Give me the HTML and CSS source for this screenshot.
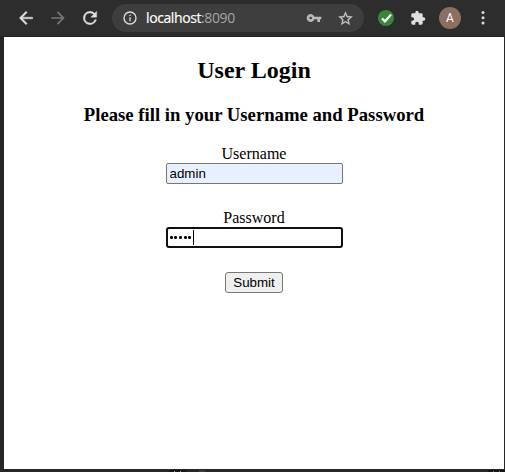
FILE: index.html
```
<!DOCTYPE html>
<html lang="en">
<head>
<meta charset="utf-8">
<title>User Login</title>
<link rel="stylesheet" href="styles.css">
</head>
<body>
<header class="toolbar">
  <svg class="icon back" viewBox="0 0 24 24"><path d="M20 11H7.83l5.59-5.59L12 4l-8 8 8 8 1.41-1.41L7.83 13H20v-2z"/></svg>
  <svg class="icon forward" viewBox="0 0 24 24"><path d="M12 4l-1.41 1.41L16.17 11H4v2h12.17l-5.58 5.59L12 20l8-8z"/></svg>
  <svg class="icon reload" viewBox="0 0 24 24"><path d="M17.65 6.35A7.96 7.96 0 0 0 12 4a8 8 0 1 0 7.73 10h-2.08A6 6 0 1 1 12 6c1.66 0 3.14.69 4.22 1.78L13 11h7V4l-2.35 2.35z"/></svg>
  <div class="address">
    <svg class="info" viewBox="0 0 24 24"><path d="M11 7h2v2h-2zm0 4h2v6h-2zm1-9a10 10 0 1 0 0 20 10 10 0 0 0 0-20zm0 18a8 8 0 1 1 0-16 8 8 0 0 1 0 16z"/></svg>
    <span class="url"><span class="host">localhost</span><span class="port">:8090</span></span>
    <svg class="key" viewBox="0 0 24 24"><path d="M12.650 10A6 6 0 1 0 12.650 14H17v4h4v-4h2v-4H12.650zM7 14a2 2 0 1 1 0-4 2 2 0 0 1 0 4z"/></svg>
    <svg class="star" viewBox="0 0 24 24"><path d="M22 9.24l-7.19-.62L12 2 9.19 8.63 2 9.24l5.46 4.73L5.82 21 12 17.27 18.18 21l-1.63-7.03L22 9.24zM12 15.4l-3.76 2.27 1-4.28-3.32-2.88 4.38-.38L12 6.1l1.71 4.04 4.38.38-3.32 2.88 1 4.28L12 15.4z"/></svg>
  </div>
  <svg class="check" viewBox="0 0 16 16"><circle cx="8" cy="8" r="8"/><path d="M4 8.500l2.900 2.900 6.200-7"/></svg>
  <svg class="puzzle" viewBox="0 0 24 24"><path d="M20.500 11H19V7c0-1.100-.9-2-2-2h-4V3.500a2.500 2.500 0 0 0-5 0V5H4c-1.100 0-2 .9-2 2v3.800h1.500a2.700 2.700 0 0 1 0 5.400H2V20c0 1.100.9 2 2 2h3.800v-1.500a2.700 2.700 0 0 1 5.400 0V22H17c1.100 0 2-.9 2-2v-4h1.500a2.500 2.500 0 0 0 0-5z"/></svg>
  <span class="avatar">A</span>
  <svg class="menu" viewBox="0 0 4 16"><circle cx="2" cy="2.500" r="1.500"/><circle cx="2" cy="7.800" r="1.500"/><circle cx="2" cy="13.100" r="1.500"/></svg>
</header>
<main class="page">
  <h2>User Login</h2>
  <h3>Please fill in your Username and Password</h3>
  <form class="login">
    <label for="username">Username</label>
    <input class="field filled" id="username" type="text" value="admin">
    <label for="password">Password</label>
    <div class="field focused" id="password"><span class="dots"><i></i><i></i><i></i><i></i><i></i></span><span class="caret"></span></div>
    <button type="button">Submit</button>
  </form>
</main>
<footer class="edge"><span class="notch"><i></i><i></i></span><span class="block"></span><span class="notch end"><i></i><i></i></span></footer>
</body>
</html>
```
FILE: styles.css
```
* { box-sizing: border-box; }
body {
  margin: 0;
  width: 505px;
  height: 472px;
  overflow: hidden;
  background: #272727;
  font-family: "Liberation Serif", serif;
  font-size: 16px;
  color: #000;
}
svg { display: block; flex: none; fill: #dedede; }
.toolbar {
  display: flex;
  align-items: center;
  height: 37px;
  padding: 0 0 1px 16px;
  background: #2d2d2d;
  border-bottom: 1px solid #222;
}
.icon { width: 20px; height: 20px; }
.back, .reload { stroke: #dedede; stroke-width: 0.5; }
.forward { margin-left: 12px; fill: #777; }
.reload { margin-left: 12px; }
.address {
  display: flex;
  align-items: center;
  width: 252px;
  height: 28px;
  margin: 1px 0 0 12px;
  padding-left: 10px;
  border-radius: 14px;
  background: #3e3e3e;
}
.info { width: 16px; height: 16px; }
.url {
  width: 160px;
  margin-left: 8px;
  font: 14px/20px "Open Sans", sans-serif;
  letter-spacing: -0.4px;
  white-space: nowrap;
}
.host { color: #fff; -webkit-text-stroke: 0.2px #fff; }
.port { color: #a5a5a5; }
.key { width: 16px; height: 16px; margin-top: -1px; fill: #b8b8b8; }
.star { width: 17px; height: 17px; margin-left: 15px; fill: #c4c4c4; stroke: #c4c4c4; stroke-width: 0.3; }
.check { width: 16px; height: 16px; margin-left: 14px; fill: #388738; }
.check path { fill: none; stroke: #fff; stroke-width: 2.2; }
.puzzle { width: 16px; height: 16px; margin-left: 16px; }
.avatar {
  width: 22px;
  height: 22px;
  margin-left: 13px;
  border-radius: 50%;
  background: #8d6e63;
  color: #fff;
  font: 12px/23px Roboto, sans-serif;
  text-align: center;
}
.menu { width: 4px; height: 16px; margin-left: 20px; }
.page {
  width: 500px;
  height: 432px;
  margin-left: 4px;
  padding-top: 20px;
  background: #fff;
  text-align: center;
}
h2 { margin: 0 0 20px; font-size: 24px; line-height: 27px; }
h3 { margin: 0; font-size: 18.72px; line-height: 22px; }
.login {
  display: flex;
  flex-direction: column;
  align-items: center;
  margin-top: 19px;
}
label { height: 18px; line-height: 18px; }
.field {
  width: 177px;
  height: 21px;
  margin: 0 0 25px;
  padding: 1px 3px;
  border: 1px solid #767676;
  border-radius: 2px;
  font: 13.333px "Liberation Sans", sans-serif;
}
.filled { background: #e8f0fe; color: #000; }
.focused {
  display: flex;
  align-items: center;
  padding: 0 2px;
  border: 2px solid #101010;
  border-radius: 3px;
}
.dots { display: flex; gap: 1.670px; padding: 0 0 0 0.300px; }
.dots i { width: 3px; height: 3px; border-radius: 1.200px; background: #000; }
.caret { width: 1px; height: 15px; margin-left: 1.500px; background: #000; }
button {
  width: 58px;
  height: 21px;
  margin-top: -1px;
  padding: 0;
  border: 1px solid #767676;
  border-radius: 3px;
  background: #efefef;
  color: #000;
  font: 13.333px "Liberation Sans", sans-serif;
}
.edge { display: flex; height: 3px; padding: 1px 0 0 169px; }
.notch { display: flex; width: 17px; height: 2px; padding: 1px 5px 0; justify-content: space-between; background: #161616; }
.notch i { width: 1px; height: 1px; background: #aaa; }
.block { width: 6px; height: 2px; margin-left: 13px; background: #3c3c3c; }
.end { margin-left: auto; }
.end i { background: #777; }
```
